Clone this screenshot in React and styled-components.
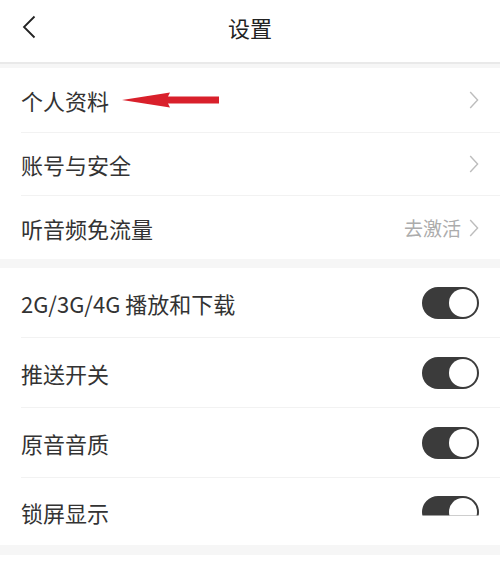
import styled, {createGlobalStyle} from "styled-components";

const GlobalStyle = createGlobalStyle`
  *, *::before, *::after {
    box-sizing: border-box;
  }
  html, body {
    margin: 0;
    padding: 0;
    background: #ffffff;
    font-family: "Noto Sans CJK SC", "Noto Sans", sans-serif;
  }
`;

const profileRows = [
  {label: "个人资料", arrow: true, height: 64},
  {label: "账号与安全", height: 63},
  {label: "听音频免流量", extra: "去激活", height: 64},
];

const toggleRows = [
  {label: "2G/3G/4G 播放和下载", height: 69},
  {label: "推送开关", height: 70},
  {label: "原音音质", height: 70},
  {label: "锁屏显示", height: 68, cut: true},
];

export default function App() {
  return (
    <Page>
      <GlobalStyle/>
      <Header>
        <BackButton>
          <svg width="14" height="24" viewBox="0 0 14 24">
            <path d="M12.5 1.5 L2 12 L12.5 22.5" fill="none" stroke="#222" strokeWidth="1.8"/>
          </svg>
        </BackButton>
        <Title>设置</Title>
      </Header>
      <Band height={4}/>
      <Group>
        {profileRows.map((row, i) => (
          <Row key={row.label} height={row.height} divider={i > 0}>
            <Label>
              {row.label}
              {row.arrow && <RedArrow/>}
            </Label>
            <Right>
              {row.extra && <Extra>{row.extra}</Extra>}
              <Chevron/>
            </Right>
          </Row>
        ))}
      </Group>
      <Band height={9}/>
      <Group>
        {toggleRows.map((row, i) => (
          <Row key={row.label} height={row.height} divider={i > 0}>
            <Label>{row.label}</Label>
            <Toggle cut={row.cut}>
              <Knob/>
            </Toggle>
          </Row>
        ))}
      </Group>
      <Band height={10}/>
    </Page>
  );
}

function RedArrow() {
  return (
    <ArrowMark width="98" height="16" viewBox="0 0 98 16">
      <path d="M0 8 L48 0.5 L46 4.6 L97 4.6 L97 11.4 L46 11.4 L48 15.5 Z" fill="#d9202b"/>
    </ArrowMark>
  );
}

function Chevron() {
  return (
    <svg width="10" height="18" viewBox="0 0 10 18">
      <path d="M1.2 1 L8.6 9 L1.2 17" fill="none" stroke="#bdbdbd" strokeWidth="1.4"/>
    </svg>
  );
}

const Page = styled.div`
  width: 500px;
  min-height: 575px;
  background: #ffffff;
`;

const Header = styled.div`
  position: relative;
  height: 64px;
  display: flex;
  align-items: center;
  justify-content: center;
  border-bottom: 2px solid #e9e9e9;
`;

const BackButton = styled.div`
  position: absolute;
  left: 22px;
  top: 15px;
  display: flex;
`;

const Title = styled.div`
  font-size: 22px;
  color: #222;
  margin-top: -8px;
`;

const Band = styled.div`
  height: ${({height}) => height}px;
  background: #f6f6f6;
`;

const Group = styled.div`
  background: #ffffff;
`;

const Row = styled.div`
  height: ${({height}) => height}px;
  margin-left: 21px;
  padding-right: 21px;
  display: flex;
  align-items: center;
  justify-content: space-between;
  border-top: ${({divider}) => divider ? "1px solid #f2f2f2" : "none"};
`;

const Label = styled.div`
  display: flex;
  align-items: center;
  font-size: 22px;
  color: #333;
`;

const ArrowMark = styled.svg`
  margin-left: 13px;
  margin-top: -1px;
`;

const Right = styled.div`
  display: flex;
  align-items: center;
  gap: 8px;
`;

const Extra = styled.span`
  font-size: 19px;
  color: #acacac;
`;

const Toggle = styled.div`
  position: relative;
  width: 57px;
  height: 32px;
  border-radius: 16px;
  background: #3b3b3b;
  clip-path: ${({cut}) => cut ? "inset(0 0 12px 0)" : "none"};
`;

const Knob = styled.div`
  position: absolute;
  right: 2px;
  top: 2px;
  width: 28px;
  height: 28px;
  border-radius: 50%;
  background: #ffffff;
`;
